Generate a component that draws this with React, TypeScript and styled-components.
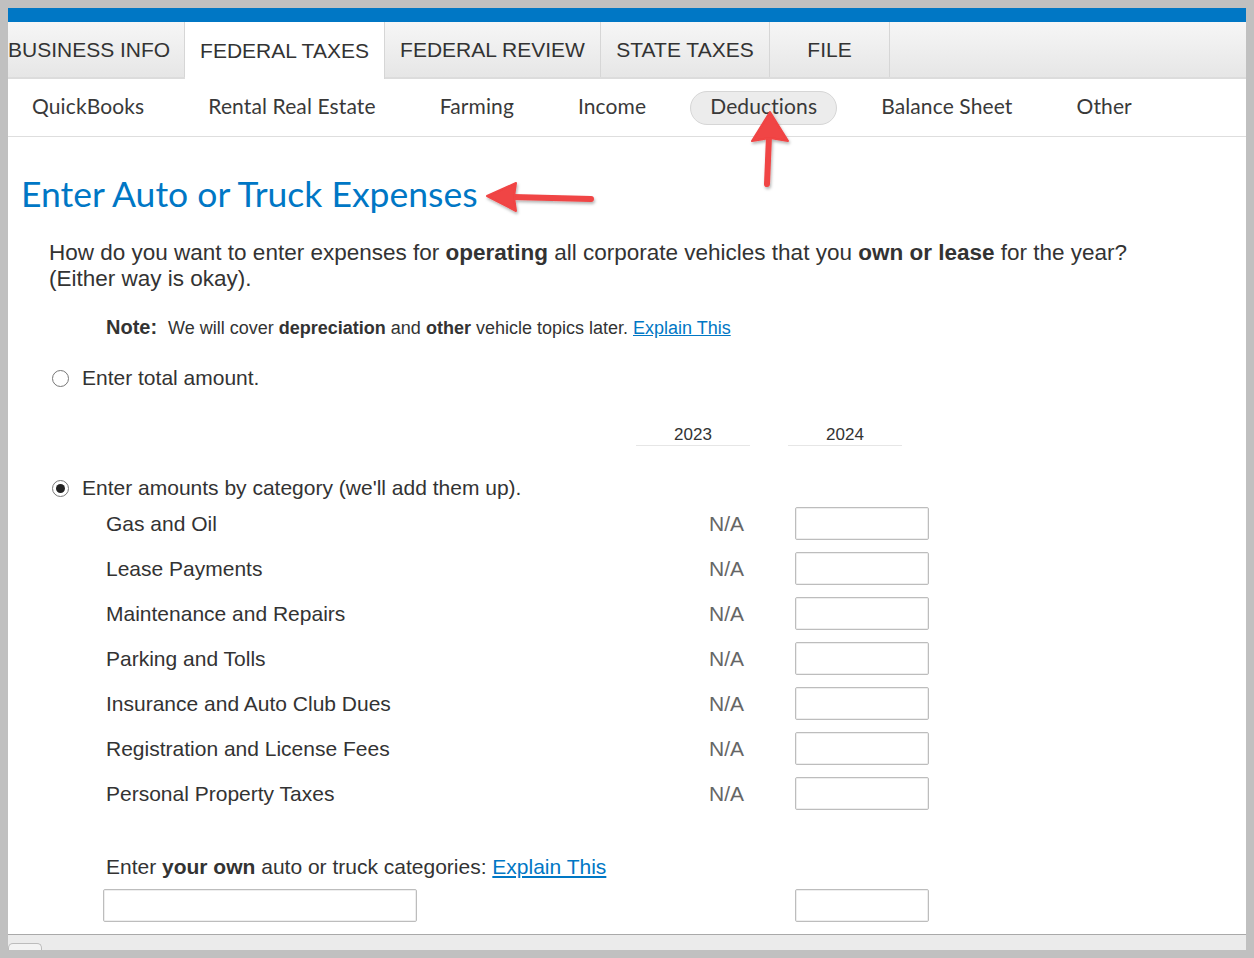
import React from "react";
import styled, { createGlobalStyle } from "styled-components";

const Global = createGlobalStyle`
  html, body { margin: 0; padding: 0; background: #c0c0c0; }
  body { font-family: "Liberation Sans", Arial, sans-serif; color: #333; }
  * { box-sizing: border-box; }
`;

const Frame = styled.div`
  position: relative;
  margin: 8px 0 0 8px;
  width: 1238px;
  height: 942px;
  background: #fff;
  display: flex;
  flex-direction: column;
  overflow: hidden;
`;

const TopBar = styled.div`
  height: 14px;
  background: #0077c5;
  flex: none;
`;

const TabBar = styled.div`
  height: 57px;
  flex: none;
  display: flex;
  background: linear-gradient(#f6f6f6, #e6e6e6);
  border-bottom: 2px solid #dcdcdc;
`;

const Tab = styled.div<{ $w: number; $active?: boolean; $left?: boolean }>`
  width: ${(p) => p.$w}px;
  flex: none;
  display: flex;
  align-items: center;
  justify-content: ${(p) => (p.$left ? "flex-start" : "center")};
  font-size: 21px;
  color: #333;
  text-transform: uppercase;
  border-right: 1px solid #d6d6d6;
  background: ${(p) => (p.$active ? "#fff" : "transparent")};
  margin-bottom: ${(p) => (p.$active ? "-2px" : "0")};
`;

const SubNav = styled.div`
  height: 58px;
  flex: none;
  display: flex;
  align-items: center;
  gap: 24px;
  padding-left: 4px;
  border-bottom: 1px solid #dedede;
`;

const SubItem = styled.div<{ $active?: boolean }>`
  font-family: Lato, "Open Sans", sans-serif;
  font-size: 21px;
  letter-spacing: 0.12px;
  color: #393939;
  height: 34px;
  line-height: 28px;
  padding: 0 19px 4px;
  border-radius: 17px;
  border: 1px solid ${(p) => (p.$active ? "#d6d6d6" : "transparent")};
  background: ${(p) => (p.$active ? "#ececec" : "transparent")};
`;

const Content = styled.div`
  flex: 1;
  padding: 37px 0 0 0;
  display: flex;
  flex-direction: column;
`;

const Heading = styled.h1`
  margin: 0 0 0 13px;
  font-family: Lato, "Open Sans", sans-serif;
  font-weight: 400;
  font-size: 35.5px;
  line-height: 40px;
  color: #0077c5;
`;

const Lead = styled.p`
  margin: 26px 0 0 41px;
  font-size: 22.5px;
  line-height: 26px;
  color: #333;
`;

const Note = styled.p`
  margin: 23px 0 0 98px;
  font-size: 18px;
  line-height: 24px;
  color: #333;
  b.label { font-size: 20px; margin-right: 11px; }
`;

const Link = styled.a`
  color: #0077c5;
  text-decoration: underline;
  cursor: pointer;
`;

const RadioRow = styled.label<{ $mt: number }>`
  margin: ${(p) => p.$mt}px 0 0 44px;
  display: flex;
  align-items: center;
  gap: 13px;
  height: 24px;
  font-size: 21px;
  color: #333;
`;

const Radio = styled.span<{ $checked?: boolean }>`
  width: 17px;
  height: 17px;
  border-radius: 50%;
  border: 1px solid #777;
  background: #fff;
  display: flex;
  align-items: center;
  justify-content: center;
  &::after {
    content: "";
    width: 9px;
    height: 9px;
    border-radius: 50%;
    background: ${(p) => (p.$checked ? "#222" : "transparent")};
  }
`;

const YearRow = styled.div`
  margin: 35px 0 0 628px;
  display: flex;
  gap: 38px;
`;

const Year = styled.div`
  width: 114px;
  height: 21px;
  line-height: 20px;
  text-align: center;
  font-size: 17px;
  color: #333;
  border-bottom: 1px solid #e6e6e6;
`;

const Rows = styled.div`
  margin: 1px 0 0 98px;
  display: grid;
  grid-template-columns: 603px 86px 134px;
  grid-auto-rows: 45px;
  align-items: center;
`;

const RowLabel = styled.div`
  font-size: 21px;
  color: #333;
`;

const NA = styled.div`
  font-size: 21px;
  color: #666;
`;

const Field = styled.input<{ $w: number }>`
  width: ${(p) => p.$w}px;
  height: 33px;
  border: 1px solid #bdbdbd;
  border-radius: 2px;
  background: #fff;
  outline: none;
  box-shadow: inset 0 0 0 1px #eee;
`;

const OwnLabel = styled.p`
  margin: 39px 0 0 98px;
  font-size: 21px;
  line-height: 24px;
  color: #333;
`;

const OwnRow = styled.div`
  margin: 10px 0 0 95px;
  display: flex;
  gap: 378px;
`;

const Footer = styled.div`
  height: 16px;
  flex: none;
  border-top: 1px solid #a9a9a9;
  background: #ebebeb;
  display: flex;
  align-items: flex-end;
`;

const FooterTab = styled.div`
  width: 34px;
  height: 7px;
  border: 1px solid #bcbcbc;
  border-bottom: none;
  border-radius: 5px 5px 0 0;
  background: #f3f3f3;
`;

const Annotations = styled.svg`
  position: absolute;
  left: 0;
  top: 0;
  width: 1238px;
  height: 942px;
  pointer-events: none;
`;

const categories = [
  "Gas and Oil",
  "Lease Payments",
  "Maintenance and Repairs",
  "Parking and Tolls",
  "Insurance and Auto Club Dues",
  "Registration and License Fees",
  "Personal Property Taxes",
];

export default function App() {
  return (
    <>
      <Global />
      <Frame>
        <TopBar />
        <TabBar>
          <Tab $w={177} $left>Business Info</Tab>
          <Tab $w={200} $active>Federal Taxes</Tab>
          <Tab $w={216}>Federal Review</Tab>
          <Tab $w={169}>State Taxes</Tab>
          <Tab $w={120}>File</Tab>
        </TabBar>
        <SubNav>
          <SubItem>QuickBooks</SubItem>
          <SubItem>Rental Real Estate</SubItem>
          <SubItem>Farming</SubItem>
          <SubItem>Income</SubItem>
          <SubItem $active>Deductions</SubItem>
          <SubItem>Balance Sheet</SubItem>
          <SubItem>Other</SubItem>
        </SubNav>
        <Content>
          <Heading>Enter Auto or Truck Expenses</Heading>
          <Lead>
            How do you want to enter expenses for <b>operating</b> all corporate vehicles that you{" "}
            <b>own or lease</b> for the year?
            <br />
            (Either way is okay).
          </Lead>
          <Note>
            <b className="label">Note:</b>We will cover <b>depreciation</b> and <b>other</b> vehicle
            topics later. <Link>Explain This</Link>
          </Note>
          <RadioRow $mt={26}>
            <Radio />
            Enter total amount.
          </RadioRow>
          <YearRow>
            <Year>2023</Year>
            <Year>2024</Year>
          </YearRow>
          <RadioRow $mt={30}>
            <Radio $checked />
            Enter amounts by category (we'll add them up).
          </RadioRow>
          <Rows>
            {categories.map((c) => (
              <React.Fragment key={c}>
                <RowLabel>{c}</RowLabel>
                <NA>N/A</NA>
                <Field $w={134} />
              </React.Fragment>
            ))}
          </Rows>
          <OwnLabel>
            Enter <b>your own</b> auto or truck categories: <Link>Explain This</Link>
          </OwnLabel>
          <OwnRow>
            <Field $w={314} />
            <Field $w={134} />
          </OwnRow>
        </Content>
        <Footer>
          <FooterTab />
        </Footer>
        <Annotations viewBox="0 0 1238 942">
          <defs>
            <filter id="sh" x="-20%" y="-20%" width="140%" height="140%">
              <feDropShadow dx="1" dy="2" stdDeviation="1.5" floodColor="#000" floodOpacity="0.3" />
            </filter>
          </defs>
          <g fill="#f04444" stroke="#f04444" filter="url(#sh)">
            <line x1="505" y1="189" x2="583" y2="191" strokeWidth="6" strokeLinecap="round" />
            <polygon points="479,188 508,175 506,189 508,203" strokeWidth="2" strokeLinejoin="round" />
            <line x1="761" y1="128" x2="759" y2="176" strokeWidth="6" strokeLinecap="round" />
            <polygon points="762,104 780,133 762,130 744,133" strokeWidth="2" strokeLinejoin="round" />
          </g>
        </Annotations>
      </Frame>
    </>
  );
}
